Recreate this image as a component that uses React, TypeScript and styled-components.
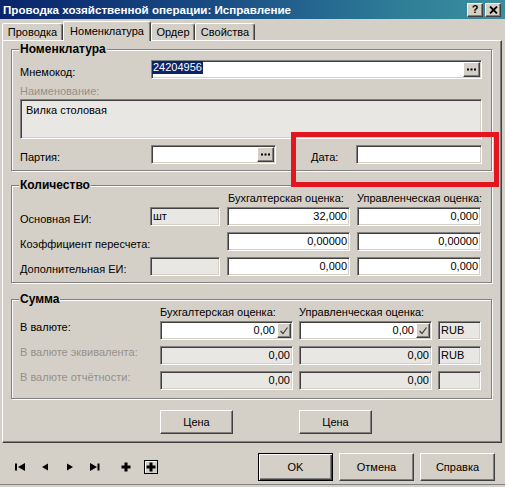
import React from "react";
import styled, { createGlobalStyle, css } from "styled-components";

const BG = "#d4d0c8";
const FIELD_OFF = "#e9e7e3";
const DIS_TEXT = "#94918c";

const GlobalStyle = createGlobalStyle`
  html, body { margin: 0; padding: 0; background: ${BG}; }
  body {
    font-family: "Liberation Sans", Arial, sans-serif;
    font-size: 11px;
    color: #000;
  }
  * { box-sizing: border-box; }
`;

const Window = styled.div`
  position: relative;
  width: 505px;
  height: 487px;
  background: ${BG};
  display: flex;
  flex-direction: column;
  overflow: hidden;
`;

const TitleBar = styled.div`
  flex: none;
  height: 19px;
  display: flex;
  align-items: center;
  padding: 0 4px 0 3px;
  background: linear-gradient(90deg, #08246b 0%, #1a4f85 45%, #2f7f98 80%, #3b8f9d 100%);
`;

const TitleText = styled.div`
  flex: 1;
  color: #fff;
  font-weight: bold;
  font-size: 11.6px;
  white-space: nowrap;
`;

const CaptionButton = styled.div`
  width: 16px;
  height: 14px;
  margin-left: 2px;
  background: ${BG};
  border: 1px solid;
  border-color: #fff #404040 #404040 #fff;
  box-shadow: inset -1px -1px #808080;
  display: flex;
  align-items: center;
  justify-content: center;
  font-weight: bold;
  font-size: 11px;
  line-height: 1;
`;

const TabStrip = styled.div`
  flex: none;
  height: 19px;
  margin-top: 2px;
  padding-left: 2px;
  display: flex;
  align-items: flex-end;
`;

const Tab = styled.div<{ $active?: boolean; $w: number }>`
  width: ${(p) => p.$w}px;
  height: 17px;
  display: flex;
  align-items: center;
  justify-content: center;
  white-space: nowrap;
  background: ${BG};
  border-top: 1px solid #fff;
  border-left: 1px solid #fff;
  border-right: 1px solid #404040;
  box-shadow: inset -1px 0 #808080;
  border-radius: 2px 3px 0 0;
  ${(p) =>
    p.$active &&
    css`
      height: 20px;
      margin-bottom: -1px;
      padding-bottom: 2px;
      position: relative;
      z-index: 1;
    `}
`;

const Panel = styled.div`
  margin: 0 3px 0 2px;
  padding: 2px 9px 8px 8px;
  border-top: 1px solid #fff;
  border-left: 1px solid #fff;
  border-right: 1px solid #404040;
  border-bottom: 1px solid #404040;
  box-shadow: inset -1px -1px #808080;
  display: flex;
  flex-direction: column;
`;

const Group = styled.fieldset<{ $mt?: number; $pt: number; $pb: number }>`
  margin: ${(p) => p.$mt ?? 0}px 0 0 0;
  min-width: 0;
  min-inline-size: 0;
  border: 1px solid #808080;
  box-shadow: inset 1px 1px #fff, 1px 1px #fff;
  padding: ${(p) => p.$pt}px 9px ${(p) => p.$pb}px 8px;
`;

const Legend = styled.legend`
  font-weight: bold;
  font-size: 12px;
  line-height: 13px;
  padding: 0 1px;
  margin-left: -1px;
  background: ${BG};
`;

const Row = styled.div<{ $mt?: number }>`
  display: flex;
  height: 19px;
  margin-top: ${(p) => p.$mt ?? 0}px;
`;

const Label = styled.div<{ $w?: number; $ml?: number; $off?: boolean; $top?: boolean; $span?: number }>`
  flex: none;
  width: ${(p) => (p.$w ? `${p.$w}px` : "auto")};
  margin-left: ${(p) => p.$ml ?? 0}px;
  line-height: 13px;
  white-space: nowrap;
  align-self: ${(p) => (p.$top ? "flex-start" : "flex-end")};
  color: ${(p) => (p.$off ? DIS_TEXT : "#000")};
  ${(p) => p.$span && css`grid-column: span ${p.$span};`}
`;

const SubLabel = styled.div<{ $off?: boolean }>`
  margin-top: 6px;
  line-height: 13px;
  color: ${(p) => (p.$off ? DIS_TEXT : "#000")};
`;

const Field = styled.div<{ $off?: boolean; $w?: number; $grow?: boolean; $right?: boolean }>`
  height: 19px;
  flex: ${(p) => (p.$grow ? "1" : "none")};
  width: ${(p) => (p.$w ? `${p.$w}px` : "auto")};
  display: flex;
  align-items: center;
  justify-content: ${(p) => (p.$right ? "flex-end" : "flex-start")};
  padding: 0 1px;
  background: ${(p) => (p.$off ? FIELD_OFF : "#fff")};
  border: 1px solid;
  border-color: #808080 #fff #fff #808080;
  box-shadow: inset 1px 1px #404040, inset -1px -1px ${BG};
  white-space: nowrap;
  overflow: hidden;
`;

const Value = styled.span<{ $pr?: number; $pl?: number }>`
  line-height: 13px;
  padding-right: ${(p) => p.$pr ?? 0}px;
  padding-left: ${(p) => p.$pl ?? 0}px;
`;

const Selected = styled.span`
  align-self: flex-start;
  line-height: 13px;
  background: #0a246a;
  color: #fff;
  padding: 0 1px;
  margin-left: -1px;
`;

const MiniButton = styled.div<{ $w: number; $push?: boolean }>`
  flex: none;
  margin-left: ${(p) => (p.$push ? "auto" : "0")};
  width: ${(p) => p.$w}px;
  height: 15px;
  background: ${BG};
  border: 1px solid;
  border-color: #fff #404040 #404040 #fff;
  box-shadow: inset -1px -1px #808080;
  display: flex;
  align-items: center;
  justify-content: center;
`;

const Memo = styled.div`
  margin-top: 1px;
  height: 40px;
  padding: 4px 5px;
  line-height: 13px;
  background: ${FIELD_OFF};
  border: 1px solid;
  border-color: #808080 #fff #fff #808080;
  box-shadow: inset 1px 1px #404040, inset -1px -1px ${BG};
`;

const FormGrid = styled.div<{ $cols: string; $gap: number; $mt?: number; $pl?: number }>`
  display: grid;
  grid-template-columns: ${(p) => p.$cols};
  column-gap: ${(p) => p.$gap}px;
  row-gap: 6px;
  grid-auto-rows: 19px;
  margin-top: ${(p) => p.$mt ?? 0}px;
  padding-left: ${(p) => p.$pl ?? 0}px;
`;

const HeadGrid = styled(FormGrid)`
  grid-auto-rows: 13px;
`;

const ColHead = styled.div<{ $col: number; $pl?: number }>`
  grid-column: ${(p) => p.$col};
  line-height: 13px;
  white-space: nowrap;
  padding-left: ${(p) => p.$pl ?? 0}px;
`;

const PushButton = styled.button<{ $w: number; $h: number; $default?: boolean; $col?: number }>`
  width: ${(p) => p.$w}px;
  height: ${(p) => p.$h}px;
  ${(p) => p.$col && css`grid-column: ${p.$col};`}
  font-family: inherit;
  font-size: 11px;
  color: #000;
  background: ${BG};
  padding: 0;
  border: 1px solid;
  border-color: #fff #404040 #404040 #fff;
  box-shadow: inset -1px -1px #808080;
  ${(p) =>
    p.$default &&
    css`
      border-color: #000;
      box-shadow: inset 1px 1px #fff, inset -1px -1px #404040, inset -2px -2px #808080;
    `}
`;

const ButtonRow = styled(FormGrid)`
  grid-auto-rows: 24px;
  margin-top: 11px;
`;

const BottomBar = styled.div`
  flex: none;
  display: flex;
  align-items: center;
  padding: 10px 10px 3px 13px;
  border-bottom: 1px solid #808080;
`;

const NavGroup = styled.div`
  display: flex;
  align-items: center;
  gap: 11px;
`;

const NavIcon = styled.span<{ $ml?: number }>`
  width: 14px;
  height: 14px;
  display: flex;
  margin-left: ${(p) => p.$ml ?? 0}px;
`;

const Actions = styled.div`
  margin-left: auto;
  display: flex;
  gap: 6px;
`;

const Annotation = styled.div`
  position: absolute;
  left: 291px;
  top: 132px;
  width: 208px;
  height: 55px;
  border: 5px solid #e3161f;
  pointer-events: none;
`;

const Dots = () => (
  <svg width="9" height="3" viewBox="0 0 9 3">
    <rect x="0" y="0.5" width="2" height="2" fill="#000" />
    <rect x="3.5" y="0.5" width="2" height="2" fill="#000" />
    <rect x="7" y="0.5" width="2" height="2" fill="#000" />
  </svg>
);

const Check = () => (
  <svg width="10" height="9" viewBox="0 0 10 9">
    <path d="M1.5 5 L4 7.5 L8.5 1.5" fill="none" stroke="#404040" strokeWidth="1.2" />
  </svg>
);

const CloseGlyph = () => (
  <svg width="9" height="8" viewBox="0 0 9 8">
    <path d="M1 0.5 L8 7.5 M8 0.5 L1 7.5" stroke="#000" strokeWidth="1.8" />
  </svg>
);

const FirstIcon = () => (
  <svg width="14" height="14" viewBox="0 0 14 14">
    <rect x="2" y="3.5" width="2" height="7" fill="#000" />
    <polygon points="12,3 12,11 5,7" fill="#000" />
  </svg>
);
const PrevIcon = () => (
  <svg width="14" height="14" viewBox="0 0 14 14">
    <polygon points="10,3.5 10,10.5 4,7" fill="#000" />
  </svg>
);
const NextIcon = () => (
  <svg width="14" height="14" viewBox="0 0 14 14">
    <polygon points="4,3.5 4,10.5 10,7" fill="#000" />
  </svg>
);
const LastIcon = () => (
  <svg width="14" height="14" viewBox="0 0 14 14">
    <polygon points="2,3 2,11 9,7" fill="#000" />
    <rect x="9.5" y="3.5" width="2" height="7" fill="#000" />
  </svg>
);
const PlusIcon = () => (
  <svg width="14" height="14" viewBox="0 0 14 14">
    <rect x="5.5" y="2.5" width="3" height="9" fill="#000" />
    <rect x="2.5" y="5.5" width="9" height="3" fill="#000" />
  </svg>
);
const BoxPlusIcon = () => (
  <svg width="14" height="14" viewBox="0 0 14 14">
    <rect x="0.5" y="0.5" width="13" height="13" fill={BG} stroke="#000" />
    <path d="M1.5 12.5 V1.5 H12.5" fill="none" stroke="#fff" />
    <rect x="5.5" y="2.5" width="3" height="9" fill="#000" />
    <rect x="2.5" y="5.5" width="9" height="3" fill="#000" />
  </svg>
);

const QTY_COLS = "123px 70px 123px 124px";
const SUM_COLS = "134px 133px 133px 43px";

export default function App() {
  return (
    <>
      <GlobalStyle />
      <Window>
        <TitleBar>
          <TitleText>Проводка хозяйственной операции: Исправление</TitleText>
          <CaptionButton>?</CaptionButton>
          <CaptionButton>
            <CloseGlyph />
          </CaptionButton>
        </TitleBar>

        <TabStrip>
          <Tab $w={61}>Проводка</Tab>
          <Tab $w={88} $active>
            Номенклатура
          </Tab>
          <Tab $w={44}>Ордер</Tab>
          <Tab $w={60}>Свойства</Tab>
        </TabStrip>

        <Panel>
          <Group $pt={4} $pb={6}>
            <Legend>Номенклатура</Legend>
            <Row>
              <Label $w={131}>Мнемокод:</Label>
              <Field $grow>
                <Selected>24204956</Selected>
                <MiniButton $w={17} $push>
                  <Dots />
                </MiniButton>
              </Field>
            </Row>
            <SubLabel $off>Наименование:</SubLabel>
            <Memo>Вилка столовая</Memo>
            <Row $mt={6}>
              <Label $w={131}>Партия:</Label>
              <Field $w={125}>
                <MiniButton $w={17} $push>
                  <Dots />
                </MiniButton>
              </Field>
              <Label $w={45} $ml={35}>
                Дата:
              </Label>
              <Field $grow />
            </Row>
          </Group>

          <Group $mt={8} $pt={0} $pb={6}>
            <Legend>Количество</Legend>
            <HeadGrid $cols={QTY_COLS} $gap={7}>
              <ColHead $col={3} $pl={1}>
                Бухгалтерская оценка:
              </ColHead>
              <ColHead $col={4}>Управленческая оценка:</ColHead>
            </HeadGrid>
            <FormGrid $cols={QTY_COLS} $gap={7} $mt={2}>
              <Label>Основная ЕИ:</Label>
              <Field $off>
                <Value $pl={1}>шт</Value>
              </Field>
              <Field $right>
                <Value $pr={1}>32,000</Value>
              </Field>
              <Field $right>
                <Value $pr={1}>0,000</Value>
              </Field>

              <Label $span={2}>Коэффициент пересчета:</Label>
              <Field $right>
                <Value $pr={1}>0,00000</Value>
              </Field>
              <Field $right>
                <Value $pr={1}>0,00000</Value>
              </Field>

              <Label>Дополнительная ЕИ:</Label>
              <Field $off />
              <Field $right>
                <Value $pr={1}>0,000</Value>
              </Field>
              <Field $right>
                <Value $pr={1}>0,000</Value>
              </Field>
            </FormGrid>
          </Group>

          <Group $mt={10} $pt={0} $pb={8}>
            <Legend>Сумма</Legend>
            <HeadGrid $cols={SUM_COLS} $gap={6}>
              <ColHead $col={2}>Бухгалтерская оценка:</ColHead>
              <ColHead $col={3}>Управленческая оценка:</ColHead>
            </HeadGrid>
            <FormGrid $cols={SUM_COLS} $gap={6} $mt={2}>
              <Label $top>В валюте:</Label>
              <Field $right>
                <Value $pr={2}>0,00</Value>
                <MiniButton $w={14}>
                  <Check />
                </MiniButton>
              </Field>
              <Field $right>
                <Value $pr={2}>0,00</Value>
                <MiniButton $w={14}>
                  <Check />
                </MiniButton>
              </Field>
              <Field $off>
                <Value $pl={1}>RUB</Value>
              </Field>

              <Label $top $off>
                В валюте эквивалента:
              </Label>
              <Field $off $right>
                <Value $pr={1}>0,00</Value>
              </Field>
              <Field $off $right>
                <Value $pr={1}>0,00</Value>
              </Field>
              <Field $off>
                <Value $pl={1}>RUB</Value>
              </Field>

              <Label $top $off>
                В валюте отчётности:
              </Label>
              <Field $off $right>
                <Value $pr={1}>0,00</Value>
              </Field>
              <Field $off $right>
                <Value $pr={1}>0,00</Value>
              </Field>
              <Field $off />
            </FormGrid>
          </Group>

          <ButtonRow $cols={SUM_COLS} $gap={6} $pl={9}>
            <PushButton $w={73} $h={24} $col={2}>
              Цена
            </PushButton>
            <PushButton $w={73} $h={24} $col={3}>
              Цена
            </PushButton>
          </ButtonRow>
        </Panel>

        <BottomBar>
          <NavGroup>
            <NavIcon>
              <FirstIcon />
            </NavIcon>
            <NavIcon>
              <PrevIcon />
            </NavIcon>
            <NavIcon>
              <NextIcon />
            </NavIcon>
            <NavIcon>
              <LastIcon />
            </NavIcon>
            <NavIcon $ml={6}>
              <PlusIcon />
            </NavIcon>
            <NavIcon>
              <BoxPlusIcon />
            </NavIcon>
          </NavGroup>
          <Actions>
            <PushButton $w={75} $h={28} $default>
              OK
            </PushButton>
            <PushButton $w={75} $h={28}>
              Отмена
            </PushButton>
            <PushButton $w={75} $h={28}>
              Справка
            </PushButton>
          </Actions>
        </BottomBar>

        <Annotation />
      </Window>
    </>
  );
}
